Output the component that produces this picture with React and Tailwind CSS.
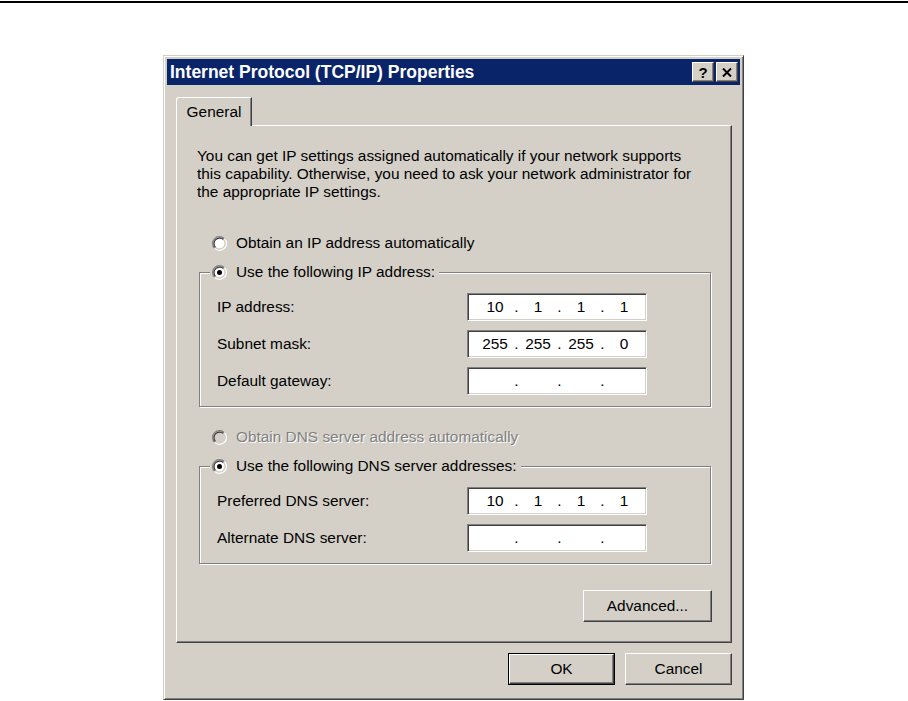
import React from "react";

function Radio({ checked, disabled }) {
  return (
    <svg width="15" height="15" viewBox="0 0 12 12" className="shrink-0">
      <circle cx="6" cy="6" r="4.2" fill={disabled ? "#d4d0c8" : "#fff"} />
      <path d="M2.11 9.89A5.5 5.5 0 0 1 9.89 2.11" fill="none" stroke="#808080" />
      <path d="M9.89 2.11A5.5 5.5 0 0 1 2.11 9.89" fill="none" stroke="#fff" />
      <path d="M2.82 9.18A4.5 4.5 0 0 1 9.18 2.82" fill="none" stroke="#404040" />
      <path d="M9.18 2.82A4.5 4.5 0 0 1 2.82 9.18" fill="none" stroke="#d4d0c8" />
      {checked && <circle cx="6" cy="6" r="2" fill="#000" />}
    </svg>
  );
}

function IpField({ parts }) {
  return (
    <div className="flex h-[28px] w-[180px] items-center border border-t-[#808080] border-l-[#808080] border-b-white border-r-white bg-white pl-[9px] shadow-[inset_1px_1px_0_#404040,inset_-1px_-1px_0_#d4d0c8]">
      {parts.map((p, i) => (
        <React.Fragment key={i}>
          {i > 0 && <span className="w-[7px] text-center">.</span>}
          <span className="w-[36px] text-center">{p}</span>
        </React.Fragment>
      ))}
    </div>
  );
}

function Row({ label, parts }) {
  return (
    <div className="flex h-[28px] items-center">
      <span className="w-[267px] pl-[17px]">{label}</span>
      <IpField parts={parts} />
    </div>
  );
}

function Group({ label, children }) {
  return (
    <div className="relative ml-[22px] w-[512px] border border-[#808080] pt-[20px] pb-[11px] shadow-[1px_1px_0_#fff,inset_1px_1px_0_#fff]">
      {/* legend sits over the top edge */}
      <div className="absolute -top-[10px] left-[10px] flex h-[18px] items-center gap-[9px] bg-[#d4d0c8] pl-[2px] pr-[4px]">
        <Radio checked />
        <span>{label}</span>
      </div>
      <div className="flex flex-col gap-[9px]">{children}</div>
    </div>
  );
}

const btn =
  "flex items-center justify-center bg-[#d4d0c8] border border-t-white border-l-white border-r-[#404040] border-b-[#404040] shadow-[inset_-1px_-1px_0_#808080]";

export default function App() {
  const empty = ["", "", "", ""];

  return (
    <div className="min-h-[701px] w-full bg-white pt-[1px] font-['Liberation_Sans',Arial,sans-serif] text-[15.4px] leading-[18px] text-black">
      <div className="h-[2px] w-full bg-black"></div>

      {/* Dialog window */}
      <div className="mt-[52px] ml-[163px] flex h-[645px] w-[581px] flex-col border border-t-[#d4d0c8] border-l-[#d4d0c8] border-r-[#404040] border-b-[#404040] bg-[#d4d0c8] p-[3px] shadow-[inset_1px_1px_0_#fff,inset_-1px_-1px_0_#808080]">
        {/* Title bar */}
        <div className="flex h-[26px] shrink-0 items-center justify-between bg-[#0a246a] pl-[3px] pr-[2px]">
          <span className="text-[17.5px] font-bold text-white">
            Internet Protocol (TCP/IP) Properties
          </span>
          <div className="flex gap-[2px]">
            <div className={`${btn} h-[20px] w-[22px] text-[15px] font-bold leading-none`}>?</div>
            <div className={`${btn} h-[20px] w-[22px]`}>
              <svg width="10" height="9" viewBox="0 0 10 9">
                <path d="M1 0.5l8 8M9 0.5l-8 8" stroke="#000" strokeWidth="2" />
              </svg>
            </div>
          </div>
        </div>

        {/* Tab */}
        <div className="mt-[12px] flex">
          <div className="relative z-10 -mb-[1px] ml-[9px] flex h-[29px] w-[76px] items-center justify-center rounded-tl-[3px] border-t border-l border-r border-t-white border-l-white border-r-[#404040] bg-[#d4d0c8] shadow-[inset_-1px_0_0_#808080]">
            General
          </div>
        </div>

        {/* Tab panel */}
        <div className="mr-[8px] ml-[9px] flex h-[518px] shrink-0 flex-col border border-t-white border-l-white border-r-[#404040] border-b-[#404040] shadow-[inset_-1px_-1px_0_#808080]">
          <p className="pt-[21px] pl-[20px]">
            You can get IP settings assigned automatically if your network supports
            <br />
            this capability. Otherwise, you need to ask your network administrator for
            <br />
            the appropriate IP settings.
          </p>

          <div className="mt-[33px] flex h-[18px] items-center gap-[9px] pl-[35px]">
            <Radio />
            <span>Obtain an IP address automatically</span>
          </div>

          <div className="mt-[20px]">
            <Group label="Use the following IP address:">
              <Row label="IP address:" parts={["10", "1", "1", "1"]} />
              <Row label="Subnet mask:" parts={["255", "255", "255", "0"]} />
              <Row label="Default gateway:" parts={empty} />
            </Group>
          </div>

          <div className="mt-[21px] flex h-[18px] items-center gap-[9px] pl-[35px]">
            <Radio disabled />
            <span className="text-[#808080] [text-shadow:1px_1px_0_#fff]">
              Obtain DNS server address automatically
            </span>
          </div>

          <div className="mt-[20px]">
            <Group label="Use the following DNS server addresses:">
              <Row label="Preferred DNS server:" parts={["10", "1", "1", "1"]} />
              <Row label="Alternate DNS server:" parts={empty} />
            </Group>
          </div>

          <div className={`${btn} mt-[26px] mr-[19px] ml-auto h-[32px] w-[129px]`}>
            Advanced...
          </div>
        </div>

        {/* Dialog buttons */}
        <div className="mt-[10px] flex justify-end gap-[10px] pr-[8px]">
          <div className="h-[32px] w-[107px] border border-black">
            <div className={`${btn} h-full w-full`}>OK</div>
          </div>
          <div className={`${btn} h-[32px] w-[107px]`}>Cancel</div>
        </div>
      </div>
    </div>
  );
}
